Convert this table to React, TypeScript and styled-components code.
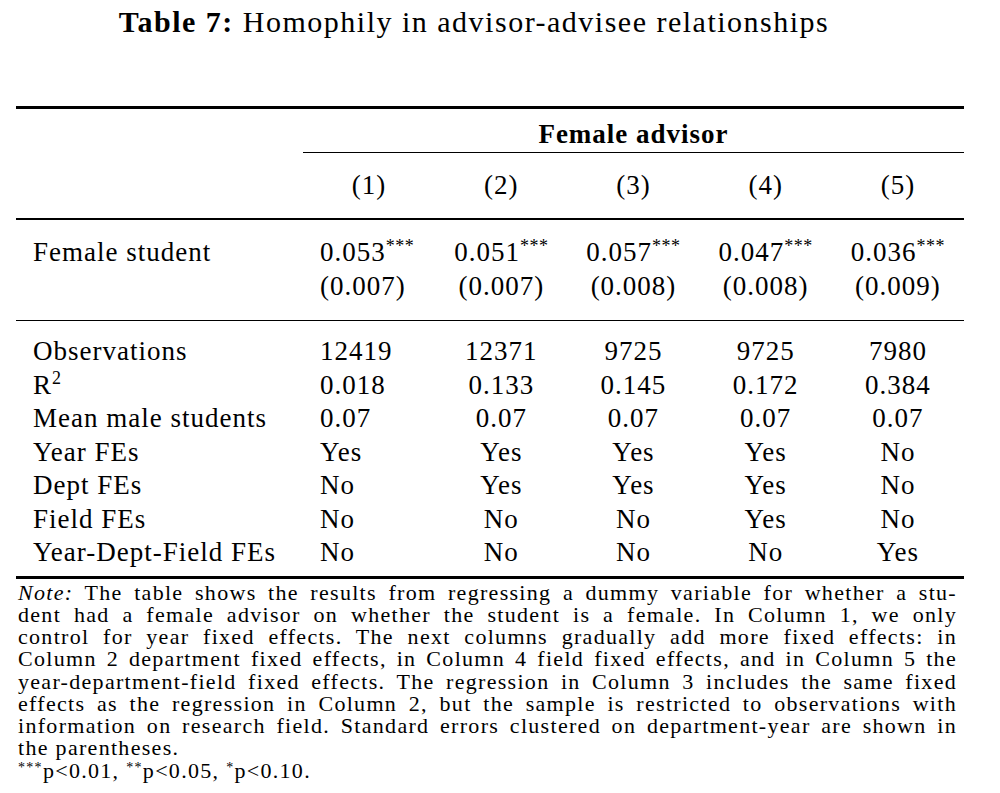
import React from 'react';
import styled, { createGlobalStyle } from 'styled-components';

// 표 7 재현: 지도교수-학생 관계의 동질성
const GlobalStyle = createGlobalStyle`
    html, body {
        margin: 0;
        padding: 0;
        background: #fff;
    }
    body {
        font-family: 'Liberation Serif', 'Times New Roman', serif;
        color: #000;
    }
`;

type Align = 'left' | 'center';

const COLUMNS = ['(1)', '(2)', '(3)', '(4)', '(5)'];

const COEF_LIST = [
    { id: 'c1', coef: '0.053', se: '(0.007)', align: 'left' as Align },
    { id: 'c2', coef: '0.051', se: '(0.007)', align: 'center' as Align },
    { id: 'c3', coef: '0.057', se: '(0.008)', align: 'center' as Align },
    { id: 'c4', coef: '0.047', se: '(0.008)', align: 'center' as Align },
    { id: 'c5', coef: '0.036', se: '(0.009)', align: 'center' as Align },
];

const STAT_LIST = [
    { id: 's_obs', label: 'Observations', values: ['12419', '12371', '9725', '9725', '7980'] },
    { id: 's_r2', label: 'R', sup: '2', values: ['0.018', '0.133', '0.145', '0.172', '0.384'] },
    { id: 's_mean', label: 'Mean male students', values: ['0.07', '0.07', '0.07', '0.07', '0.07'] },
    { id: 's_year', label: 'Year FEs', values: ['Yes', 'Yes', 'Yes', 'Yes', 'No'] },
    { id: 's_dept', label: 'Dept FEs', values: ['No', 'Yes', 'Yes', 'Yes', 'No'] },
    { id: 's_field', label: 'Field FEs', values: ['No', 'No', 'No', 'Yes', 'No'] },
    { id: 's_ydf', label: 'Year-Dept-Field FEs', values: ['No', 'No', 'No', 'No', 'Yes'] },
];

const NOTE_LINES = [
    'The table shows the results from regressing a dummy variable for whether a stu-',
    'dent had a female advisor on whether the student is a female.  In Column 1, we only',
    'control for year fixed effects.  The next columns gradually add more fixed effects:  in',
    'Column 2 department fixed effects, in Column 4 field fixed effects, and in Column 5 the',
    'year-department-field fixed effects.  The regression in Column 3 includes the same fixed',
    'effects as the regression in Column 2, but the sample is restricted to observations with',
    'information on research field. Standard errors clustered on department-year are shown in',
];

const App = () => {
    return (
        <Page>
            <GlobalStyle />
            <Title>
                <b>Table 7:</b> Homophily in advisor-advisee relationships
            </Title>
            <Table>
                <Rule $weight={3} />
                {/* 상단 헤더 */}
                <Band $top={8} $bottom={1}>
                    <Row>
                        <Cell />
                        <SpanHead>Female advisor</SpanHead>
                    </Row>
                </Band>
                <Rule $weight={1} $indent />
                <Band $top={15} $bottom={16}>
                    <Row>
                        <Cell />
                        {COLUMNS.map((c) => (
                            <Cell key={c} $align="center">
                                {c}
                            </Cell>
                        ))}
                    </Row>
                </Band>
                <Rule $weight={1.5} />
                {/* 계수 */}
                <Band $top={15} $bottom={17}>
                    <Row>
                        <Cell $align="left">Female student</Cell>
                        {COEF_LIST.map((c) => (
                            <Cell key={c.id} $align={c.align}>
                                {c.coef}
                                <Stars>***</Stars>
                            </Cell>
                        ))}
                    </Row>
                    <Row>
                        <Cell />
                        {COEF_LIST.map((c) => (
                            <Cell key={c.id} $align={c.align}>
                                {c.se}
                            </Cell>
                        ))}
                    </Row>
                </Band>
                <Rule $weight={1.5} />
                {/* 통계 */}
                <Band $top={14} $bottom={6}>
                    {STAT_LIST.map((s) => (
                        <Row key={s.id} $line={33.5}>
                            <Cell $align="left">
                                {s.label}
                                {s.sup && <Sq>{s.sup}</Sq>}
                            </Cell>
                            {s.values.map((v, i) => (
                                <Cell key={s.id + i} $align={i === 0 ? 'left' : 'center'}>
                                    {v}
                                </Cell>
                            ))}
                        </Row>
                    ))}
                </Band>
                <Rule $weight={3} />
            </Table>
            <Note>
                {NOTE_LINES.map((line, i) => (
                    <NoteLine key={'n' + i}>
                        {i === 0 && <i>Note:</i>}
                        {i === 0 ? ' ' + line : line}
                    </NoteLine>
                ))}
                <NoteLine $last>the parentheses.</NoteLine>
                <NoteLine $last>
                    <NoteStar>***</NoteStar>p&lt;0.01, <NoteStar>**</NoteStar>p&lt;0.05, <NoteStar>*</NoteStar>p&lt;0.10.
                </NoteLine>
            </Note>
        </Page>
    );
};

const Page = styled.div`
    width: 1000px;
    height: 793px;
    overflow: hidden;
    padding-left: 16px;
    box-sizing: border-box;
`;

const Title = styled.div`
    width: 916px;
    height: 44px;
    line-height: 44px;
    margin-bottom: 62px;
    text-align: center;
    font-size: 30px;
    letter-spacing: 1.5px;
    white-space: nowrap;
`;

const Table = styled.div`
    width: 948px;
    display: flex;
    flex-direction: column;
    font-size: 27px;
    letter-spacing: 1px;
`;

const Rule = styled.div<{ $weight: number; $indent?: boolean }>`
    height: ${(p) => p.$weight}px;
    margin-left: ${(p) => (p.$indent ? '287px' : '0')};
    background: #000;
`;

const Band = styled.div<{ $top: number; $bottom: number }>`
    padding-top: ${(p) => p.$top}px;
    padding-bottom: ${(p) => p.$bottom}px;
`;

const Row = styled.div<{ $line?: number }>`
    display: grid;
    grid-template-columns: 287px repeat(5, 1fr);
    height: ${(p) => p.$line ?? 34}px;
    line-height: ${(p) => p.$line ?? 34}px;
    white-space: nowrap;
`;

const Cell = styled.div<{ $align?: Align }>`
    text-align: ${(p) => p.$align ?? 'left'};
    padding-left: ${(p) => (p.$align === 'left' ? '17px' : '0')};
`;

const SpanHead = styled.div`
    grid-column: 2 / -1;
    text-align: center;
    font-weight: bold;
`;

const Stars = styled.sup`
    font-size: 18px;
    letter-spacing: 0.5px;
    vertical-align: 9px;
    line-height: 0;
`;

const Sq = styled.sup`
    font-size: 18px;
    vertical-align: 10px;
    line-height: 0;
`;

const Note = styled.div`
    width: 939px;
    margin-left: 2px;
    padding-top: 3px;
    font-size: 22px;
    letter-spacing: 1.3px;
`;

const NoteLine = styled.div<{ $last?: boolean }>`
    height: 22.25px;
    line-height: 22.25px;
    text-align: ${(p) => (p.$last ? 'left' : 'justify')};
    text-align-last: ${(p) => (p.$last ? 'left' : 'justify')};
`;

const NoteStar = styled.sup`
    font-size: 14px;
    vertical-align: 6px;
    line-height: 0;
`;

export default App;
